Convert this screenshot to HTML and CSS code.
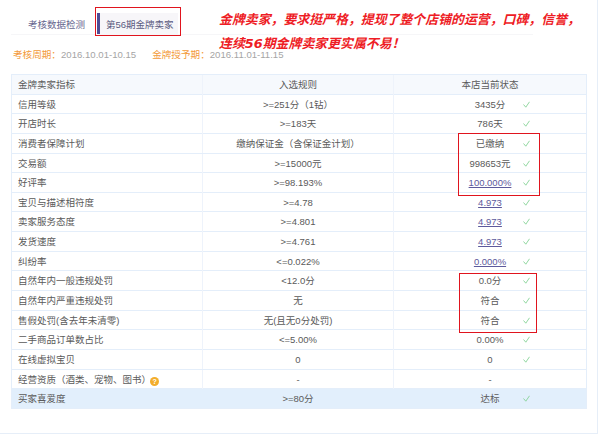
FILE: index.html
```html
<!DOCTYPE html>
<html lang="zh">
<head>
<meta charset="utf-8">
<title>第56期金牌卖家</title>
<link rel="stylesheet" href="styles.css">
</head>
<body>
<div class="page">
  <div class="tabs">
    <span class="tab">考核数据检测</span>
    <span class="tab tab-active">第56期金牌卖家</span>
  </div>
  <div class="periods">
    <span class="period"><span class="period-label">考核周期：</span>2016.10.01-10.15</span>
    <span class="period"><span class="period-label">金牌授予期：</span>2016.11.01-11.15</span>
  </div>
  <div class="table">
    <div class="row row-head"><div class="c1">金牌卖家指标</div><div class="c2">入选规则</div><div class="c3"><span class="val">本店当前状态</span></div></div>
    <div class="row"><div class="c1">信用等级</div><div class="c2">&gt;=251分（1钻）</div><div class="c3"><span class="val">3435分</span><svg class="check" viewBox="0 0 7 7"><path d="M.5 3.5 2.8 6.2 6.5.8"/></svg></div></div>
    <div class="row"><div class="c1">开店时长</div><div class="c2">&gt;=183天</div><div class="c3"><span class="val">786天</span><svg class="check" viewBox="0 0 7 7"><path d="M.5 3.5 2.8 6.2 6.5.8"/></svg></div></div>
    <div class="row"><div class="c1">消费者保障计划</div><div class="c2">缴纳保证金（含保证金计划）</div><div class="c3"><span class="val">已缴纳</span><svg class="check" viewBox="0 0 7 7"><path d="M.5 3.5 2.8 6.2 6.5.8"/></svg></div></div>
    <div class="row"><div class="c1">交易额</div><div class="c2">&gt;=15000元</div><div class="c3"><span class="val">998653元</span><svg class="check" viewBox="0 0 7 7"><path d="M.5 3.5 2.8 6.2 6.5.8"/></svg></div></div>
    <div class="row"><div class="c1">好评率</div><div class="c2">&gt;=98.193%</div><div class="c3"><a class="val link" href="#">100.000%</a><svg class="check" viewBox="0 0 7 7"><path d="M.5 3.5 2.8 6.2 6.5.8"/></svg></div></div>
    <div class="row"><div class="c1">宝贝与描述相符度</div><div class="c2">&gt;=4.78</div><div class="c3"><a class="val link" href="#">4.973</a><svg class="check" viewBox="0 0 7 7"><path d="M.5 3.5 2.8 6.2 6.5.8"/></svg></div></div>
    <div class="row"><div class="c1">卖家服务态度</div><div class="c2">&gt;=4.801</div><div class="c3"><a class="val link" href="#">4.973</a><svg class="check" viewBox="0 0 7 7"><path d="M.5 3.5 2.8 6.2 6.5.8"/></svg></div></div>
    <div class="row"><div class="c1">发货速度</div><div class="c2">&gt;=4.761</div><div class="c3"><a class="val link" href="#">4.973</a><svg class="check" viewBox="0 0 7 7"><path d="M.5 3.5 2.8 6.2 6.5.8"/></svg></div></div>
    <div class="row"><div class="c1">纠纷率</div><div class="c2">&lt;=0.022%</div><div class="c3"><a class="val link" href="#">0.000%</a><svg class="check" viewBox="0 0 7 7"><path d="M.5 3.5 2.8 6.2 6.5.8"/></svg></div></div>
    <div class="row"><div class="c1">自然年内一般违规处罚</div><div class="c2">&lt;12.0分</div><div class="c3"><span class="val">0.0分</span><svg class="check" viewBox="0 0 7 7"><path d="M.5 3.5 2.8 6.2 6.5.8"/></svg></div></div>
    <div class="row"><div class="c1">自然年内严重违规处罚</div><div class="c2">无</div><div class="c3"><span class="val">符合</span><svg class="check" viewBox="0 0 7 7"><path d="M.5 3.5 2.8 6.2 6.5.8"/></svg></div></div>
    <div class="row"><div class="c1">售假处罚(含去年未清零)</div><div class="c2">无(且无0分处罚)</div><div class="c3"><span class="val">符合</span><svg class="check" viewBox="0 0 7 7"><path d="M.5 3.5 2.8 6.2 6.5.8"/></svg></div></div>
    <div class="row"><div class="c1">二手商品订单数占比</div><div class="c2">&lt;=5.00%</div><div class="c3"><span class="val">0.00%</span><svg class="check" viewBox="0 0 7 7"><path d="M.5 3.5 2.8 6.2 6.5.8"/></svg></div></div>
    <div class="row"><div class="c1">在线虚拟宝贝</div><div class="c2">0</div><div class="c3"><span class="val">0</span><svg class="check" viewBox="0 0 7 7"><path d="M.5 3.5 2.8 6.2 6.5.8"/></svg></div></div>
    <div class="row"><div class="c1">经营资质（酒类、宠物、图书）<span class="help">?</span></div><div class="c2">-</div><div class="c3"><span class="val">-</span></div></div>
    <div class="row row-hl"><div class="c1">买家喜爱度</div><div class="c2">&gt;=80分</div><div class="c3"><span class="val">达标</span><svg class="check" viewBox="0 0 7 7"><path d="M.5 3.5 2.8 6.2 6.5.8"/></svg></div></div>
  </div>
  <div class="slogan">
    <span class="slogan-line">金牌卖家，要求挺严格，提现了整个店铺的运营，口碑，信誉，</span>
    <span class="slogan-line">连续56期金牌卖家更实属不易！</span>
  </div>
  <div class="mark mark-tab"></div>
  <div class="mark mark-a"></div>
  <div class="mark mark-b"></div>
</div>
</body>
</html>
```
FILE: styles.css
```css
* { box-sizing: border-box; }
html, body { margin: 0; background: #fff; }
body {
  font-family: "Liberation Sans", "Noto Sans CJK SC", sans-serif;
  font-size: 9.5px;
  color: #5a5a5a;
}
.page {
  position: relative;
  width: 598px;
  height: 434px;
  padding: 13px 0 0 11px;
  border-right: 1px solid #e6eef8;
  border-bottom: 1px solid #e6eef8;
  overflow: hidden;
}
.tabs {
  display: flex;
  width: 522px;
  height: 22px;
  border-bottom: 1px solid #f6f6f8;
}
.tab {
  display: flex;
  align-items: center;
  color: #66668e;
  padding-left: 17px;
  width: 86px;
}
.tab-active {
  width: 81px;
  padding-left: 6px;
  background: #f7f6f9;
  border-left: 3px solid #4e4b94;
  color: #5a5a80;
}
.periods {
  display: flex;
  gap: 16px;
  height: 39px;
  padding-left: 2px;
  padding-top: 15px;
  color: #a5a5a5;
  font-size: 9.6px;
}
.period { display: block; line-height: 10px; }
.period-label { color: #f39a3a; }
.table {
  width: 576px;
  border: 1px solid #e4eefa;
  border-bottom: none;
}
.row {
  display: grid;
  grid-template-columns: 191px 191px 1fr;
  height: 19.65px;
  line-height: 19.5px;
  border-bottom: 1px solid #e4eefa;
}
.row-head { background: #f6f9fd; }
.row-hl { background: #e2effc; }
.c1, .c2 { border-right: 1px solid #eef3fb; }
.row-hl .c1, .row-hl .c2 { border-right-color: transparent; }
.c1 { padding-left: 6px; white-space: nowrap; }
.c2 { text-align: center; }
.c3 { position: relative; text-align: center; }
.val { color: #5a5a5a; }
.link { color: #5d5a9c; text-decoration: underline; }
.check {
  position: absolute;
  left: 129px;
  top: 6px;
  width: 7px;
  height: 7px;
  fill: none;
  stroke: #86d296;
  stroke-width: 0.9;
}
.help {
  display: inline-block;
  width: 9px;
  height: 9px;
  margin-left: -1px;
  border-radius: 50%;
  background: #f3ad2b;
  color: #fff;
  font-size: 7px;
  font-weight: bold;
  line-height: 9px;
  text-align: center;
  vertical-align: -1px;
}
.slogan {
  position: absolute;
  left: 219px;
  top: 14px;
  display: flex;
  flex-direction: column;
  gap: 13px;
  font-family: "DejaVu Sans", "Noto Sans CJK SC", sans-serif;
  font-size: 12.9px;
  line-height: 11px;
  font-weight: bold;
  font-style: italic;
  color: #ee1c25;
  white-space: nowrap;
}
.mark { position: absolute; border: 1px solid #e0141e; }
.mark-tab { left: 95px; top: 7px; width: 86px; height: 29px; }
.mark-a { left: 458px; top: 133px; width: 82px; height: 63px; }
.mark-b { left: 459px; top: 273px; width: 78px; height: 60px; }
```
